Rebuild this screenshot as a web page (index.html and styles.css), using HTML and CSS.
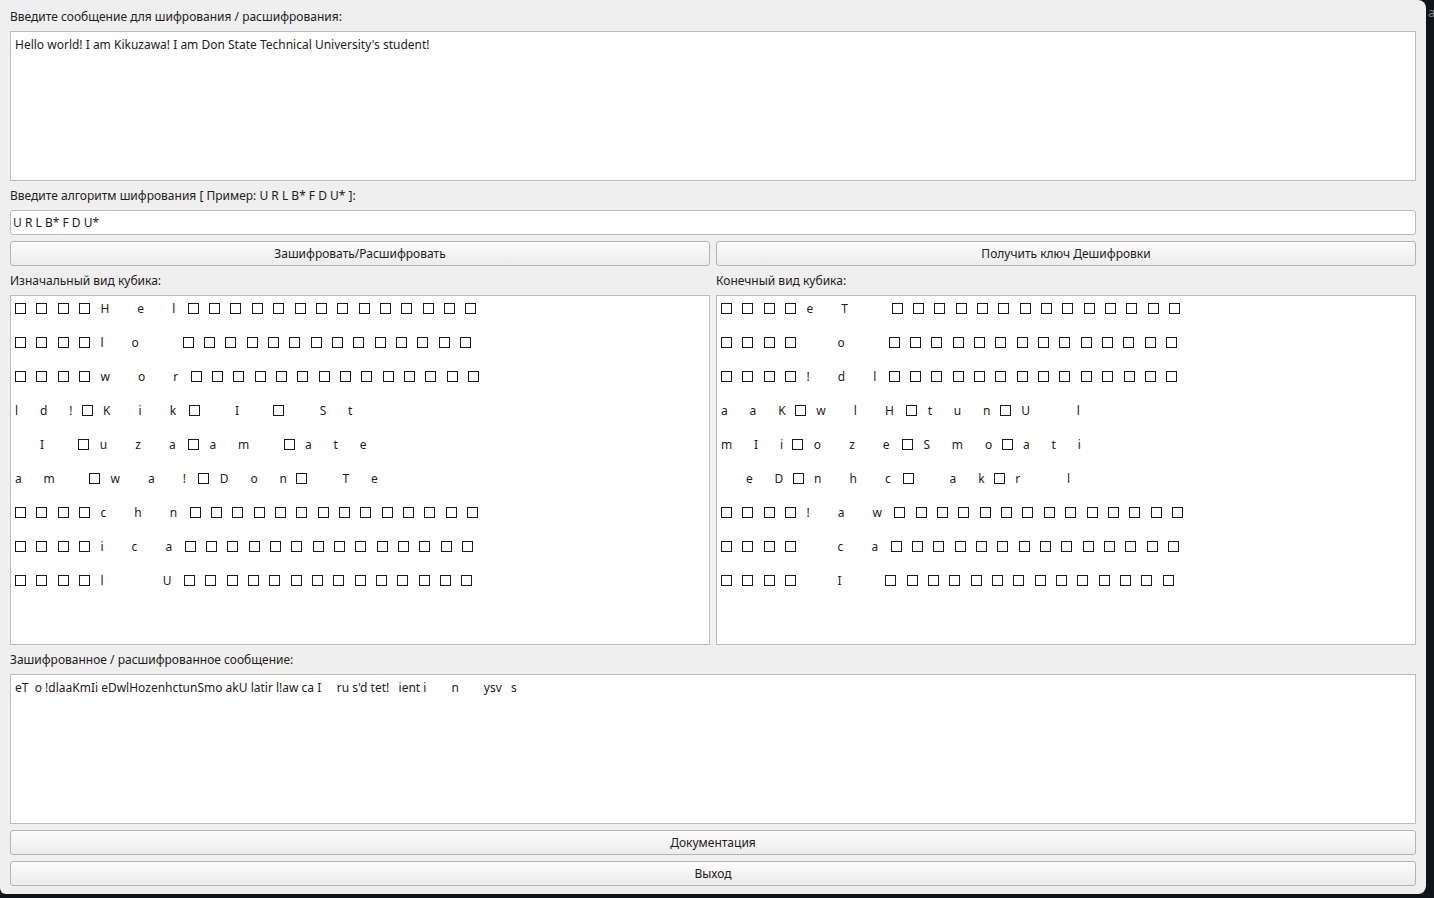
FILE: index.html
```html
<!DOCTYPE html>
<html lang="ru">
<head>
<meta charset="utf-8">
<title>Кубик</title>
<link rel="stylesheet" href="styles.css">
</head>
<body>
<span class="peek">a</span>
<div class="window">
  <div class="label">Введите сообщение для шифрования / расшифрования:</div>
  <div class="field area">Hello world! I am Kikuzawa! I am Don State Technical University's student!</div>
  <div class="label">Введите алгоритм шифрования [ Пример: U R L B* F D U* ]:</div>
  <div class="field line">U R L B* F D U*</div>
  <div class="pair">
    <div class="btn">Зашифровать/Расшифровать</div>
    <div class="btn">Получить ключ Дешифровки</div>
  </div>
  <div class="pair">
    <div class="label">Изначальный вид кубика:</div>
    <div class="label">Конечный вид кубика:</div>
  </div>
  <div class="pair cubes">
    <div class="field cube">
      <div class="row"><i class="b"></i><i class="b"></i><i class="b"></i><i class="b"></i>H<span class="g9"></span>e<span class="g9"></span>l<span class="g4"></span><i class="b"></i><i class="b"></i><i class="b"></i><i class="b"></i><i class="b"></i><i class="b"></i><i class="b"></i><i class="b"></i><i class="b"></i><i class="b"></i><i class="b"></i><i class="b"></i><i class="b"></i><i class="b"></i></div>
      <div class="row"><i class="b"></i><i class="b"></i><i class="b"></i><i class="b"></i>l<span class="g9"></span>o<span class="g14"></span><i class="b"></i><i class="b"></i><i class="b"></i><i class="b"></i><i class="b"></i><i class="b"></i><i class="b"></i><i class="b"></i><i class="b"></i><i class="b"></i><i class="b"></i><i class="b"></i><i class="b"></i><i class="b"></i></div>
      <div class="row"><i class="b"></i><i class="b"></i><i class="b"></i><i class="b"></i>w<span class="g9"></span>o<span class="g9"></span>r<span class="g4"></span><i class="b"></i><i class="b"></i><i class="b"></i><i class="b"></i><i class="b"></i><i class="b"></i><i class="b"></i><i class="b"></i><i class="b"></i><i class="b"></i><i class="b"></i><i class="b"></i><i class="b"></i><i class="b"></i></div>
      <div class="row">l<span class="g7"></span>d<span class="g7"></span>!<span class="g3"></span><i class="b"></i>K<span class="g9"></span>i<span class="g9"></span>k<span class="g4"></span><i class="b"></i><span class="g8"></span>I<span class="g11"></span><i class="b"></i><span class="g8"></span>S<span class="g7"></span>t</div>
      <div class="row"><span class="g8"></span>I<span class="g11"></span><i class="b"></i>u<span class="g9"></span>z<span class="g9"></span>a<span class="g4"></span><i class="b"></i>a<span class="g7"></span>m<span class="g11"></span><i class="b"></i>a<span class="g7"></span>t<span class="g7"></span>e</div>
      <div class="row">a<span class="g7"></span>m<span class="g11"></span><i class="b"></i>w<span class="g9"></span>a<span class="g9"></span>!<span class="g4"></span><i class="b"></i>D<span class="g7"></span>o<span class="g7"></span>n<span class="g3"></span><i class="b"></i><span class="g8"></span>T<span class="g7"></span>e</div>
      <div class="row"><i class="b"></i><i class="b"></i><i class="b"></i><i class="b"></i>c<span class="g9"></span>h<span class="g9"></span>n<span class="g4"></span><i class="b"></i><i class="b"></i><i class="b"></i><i class="b"></i><i class="b"></i><i class="b"></i><i class="b"></i><i class="b"></i><i class="b"></i><i class="b"></i><i class="b"></i><i class="b"></i><i class="b"></i><i class="b"></i></div>
      <div class="row"><i class="b"></i><i class="b"></i><i class="b"></i><i class="b"></i>i<span class="g9"></span>c<span class="g9"></span>a<span class="g4"></span><i class="b"></i><i class="b"></i><i class="b"></i><i class="b"></i><i class="b"></i><i class="b"></i><i class="b"></i><i class="b"></i><i class="b"></i><i class="b"></i><i class="b"></i><i class="b"></i><i class="b"></i><i class="b"></i></div>
      <div class="row"><i class="b"></i><i class="b"></i><i class="b"></i><i class="b"></i>l<span class="g19"></span>U<span class="g4"></span><i class="b"></i><i class="b"></i><i class="b"></i><i class="b"></i><i class="b"></i><i class="b"></i><i class="b"></i><i class="b"></i><i class="b"></i><i class="b"></i><i class="b"></i><i class="b"></i><i class="b"></i><i class="b"></i></div>
    </div>
    <div class="field cube">
      <div class="row"><i class="b"></i><i class="b"></i><i class="b"></i><i class="b"></i>e<span class="g9"></span>T<span class="g14"></span><i class="b"></i><i class="b"></i><i class="b"></i><i class="b"></i><i class="b"></i><i class="b"></i><i class="b"></i><i class="b"></i><i class="b"></i><i class="b"></i><i class="b"></i><i class="b"></i><i class="b"></i><i class="b"></i></div>
      <div class="row"><i class="b"></i><i class="b"></i><i class="b"></i><i class="b"></i><span class="g10"></span>o<span class="g14"></span><i class="b"></i><i class="b"></i><i class="b"></i><i class="b"></i><i class="b"></i><i class="b"></i><i class="b"></i><i class="b"></i><i class="b"></i><i class="b"></i><i class="b"></i><i class="b"></i><i class="b"></i><i class="b"></i></div>
      <div class="row"><i class="b"></i><i class="b"></i><i class="b"></i><i class="b"></i>!<span class="g9"></span>d<span class="g9"></span>l<span class="g4"></span><i class="b"></i><i class="b"></i><i class="b"></i><i class="b"></i><i class="b"></i><i class="b"></i><i class="b"></i><i class="b"></i><i class="b"></i><i class="b"></i><i class="b"></i><i class="b"></i><i class="b"></i><i class="b"></i></div>
      <div class="row">a<span class="g7"></span>a<span class="g7"></span>K<span class="g3"></span><i class="b"></i>w<span class="g9"></span>l<span class="g9"></span>H<span class="g4"></span><i class="b"></i>t<span class="g7"></span>u<span class="g7"></span>n<span class="g3"></span><i class="b"></i>U<span class="g15"></span>l</div>
      <div class="row">m<span class="g7"></span>I<span class="g7"></span>i<span class="g3"></span><i class="b"></i>o<span class="g9"></span>z<span class="g9"></span>e<span class="g4"></span><i class="b"></i>S<span class="g7"></span>m<span class="g7"></span>o<span class="g3"></span><i class="b"></i>a<span class="g7"></span>t<span class="g7"></span>i</div>
      <div class="row"><span class="g8"></span>e<span class="g7"></span>D<span class="g3"></span><i class="b"></i>n<span class="g9"></span>h<span class="g9"></span>c<span class="g4"></span><i class="b"></i><span class="g8"></span>a<span class="g7"></span>k<span class="g3"></span><i class="b"></i>r<span class="g15"></span>l</div>
      <div class="row"><i class="b"></i><i class="b"></i><i class="b"></i><i class="b"></i>!<span class="g9"></span>a<span class="g9"></span>w<span class="g4"></span><i class="b"></i><i class="b"></i><i class="b"></i><i class="b"></i><i class="b"></i><i class="b"></i><i class="b"></i><i class="b"></i><i class="b"></i><i class="b"></i><i class="b"></i><i class="b"></i><i class="b"></i><i class="b"></i></div>
      <div class="row"><i class="b"></i><i class="b"></i><i class="b"></i><i class="b"></i><span class="g10"></span>c<span class="g9"></span>a<span class="g4"></span><i class="b"></i><i class="b"></i><i class="b"></i><i class="b"></i><i class="b"></i><i class="b"></i><i class="b"></i><i class="b"></i><i class="b"></i><i class="b"></i><i class="b"></i><i class="b"></i><i class="b"></i><i class="b"></i></div>
      <div class="row"><i class="b"></i><i class="b"></i><i class="b"></i><i class="b"></i><span class="g10"></span>I<span class="g14"></span><i class="b"></i><i class="b"></i><i class="b"></i><i class="b"></i><i class="b"></i><i class="b"></i><i class="b"></i><i class="b"></i><i class="b"></i><i class="b"></i><i class="b"></i><i class="b"></i><i class="b"></i><i class="b"></i></div>
    </div>
  </div>
  <div class="label">Зашифрованное / расшифрованное сообщение:</div>
  <div class="field area">eT  o !dlaaKmIi eDwlHozenhctunSmo akU latir l!aw ca I     ru s'd tet!   ient i        n        ysv   s</div>
  <div class="btn">Документация</div>
  <div class="btn">Выход</div>
</div>
</body>
</html>
```

FILE: styles.css
```css
html, body {
  margin: 0;
  padding: 0;
}

body {
  width: 1434px;
  height: 898px;
  background: #0e1518;
  font-family: "Noto Sans", "Open Sans", sans-serif;
  font-size: 12px;
  line-height: 17px;
  color: #1f2022;
  overflow: hidden;
  position: relative;
}

.peek {
  position: absolute;
  left: 1428px;
  top: 4px;
  color: #7d8588;
  font-size: 13px;
}

.window {
  width: 1426px;
  height: 894px;
  box-sizing: border-box;
  background: #efefef;
  border-radius: 0 8px 8px 6px;
  padding: 8px 10px 0 10px;
  display: flex;
  flex-direction: column;
  gap: 6px;
}

.label {
  height: 17px;
  white-space: nowrap;
}

.field {
  background: #ffffff;
  border: 1px solid #bcbcbc;
  box-sizing: border-box;
}

.area {
  height: 150px;
  padding: 4px;
  white-space: pre;
}

.line {
  height: 25px;
  border-radius: 3px;
  padding: 3px 2px;
  white-space: pre;
}

.pair {
  display: grid;
  grid-template-columns: 1fr 1fr;
  gap: 6px;
}

.btn {
  height: 25px;
  box-sizing: border-box;
  border: 1px solid #b4b4b4;
  border-radius: 3px;
  background: linear-gradient(to bottom, #fcfcfc 0%, #f3f3f3 55%, #ececec 100%);
  display: flex;
  align-items: center;
  justify-content: center;
  white-space: nowrap;
}

.cubes {
  height: 350px;
}

.cube {
  padding: 4px;
  overflow: hidden;
}

.row {
  height: 17px;
  margin-bottom: 17px;
  white-space: pre;
}

.b {
  display: inline-block;
  box-sizing: border-box;
  width: 11px;
  height: 11px;
  border: 1px solid #1a1a1a;
  margin-right: 10.35px;
  vertical-align: -1px;
}

.row span {
  display: inline-block;
}

.g3 { width: 9.36px; }
.g4 { width: 12.48px; }
.g7 { width: 21.84px; }
.g8 { width: 24.96px; }
.g9 { width: 28.08px; }
.g10 { width: 31.2px; }
.g11 { width: 34.32px; }
.g14 { width: 43.68px; }
.g15 { width: 46.8px; }
.g19 { width: 59.28px; }
```
